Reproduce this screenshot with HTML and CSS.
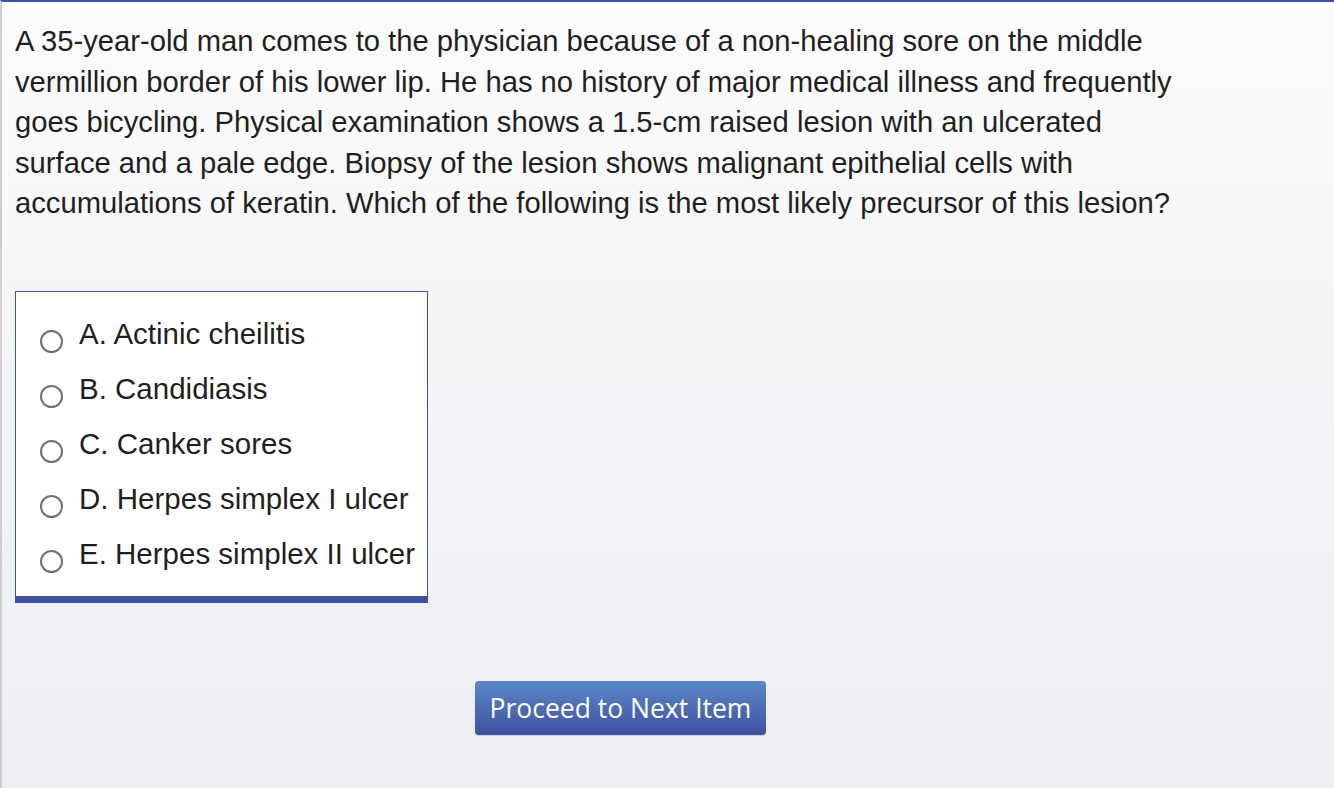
FILE: index.html
```html
<!DOCTYPE html>
<html>
<head>
<meta charset="utf-8">
<link rel="stylesheet" href="styles.css">
</head>
<body>
<div class="page">
  <p class="stem">A 35-year-old man comes to the physician because of a non-healing sore on the middle vermillion border of his lower lip. He has no history of major medical illness and frequently goes bicycling. Physical examination shows a 1.5-cm raised lesion with an ulcerated surface and a pale edge. Biopsy of the lesion shows malignant epithelial cells with accumulations of keratin. Which of the following is the most likely precursor of this lesion?</p>
  <div class="choices">
    <label class="choice"><span class="radio"></span><span>A. Actinic cheilitis</span></label>
    <label class="choice"><span class="radio"></span><span>B. Candidiasis</span></label>
    <label class="choice"><span class="radio"></span><span>C. Canker sores</span></label>
    <label class="choice"><span class="radio"></span><span>D. Herpes simplex I ulcer</span></label>
    <label class="choice"><span class="radio"></span><span>E. Herpes simplex II ulcer</span></label>
  </div>
  <div class="actions">
    <button class="next">Proceed to Next Item</button>
  </div>
</div>
</body>
</html>
```
FILE: styles.css
```css
html, body {
  margin: 0;
  padding: 0;
  height: 100%;
}
body {
  font-family: "Liberation Sans", Arial, sans-serif;
  color: #1f1f1f;
  background: linear-gradient(to bottom, #fcfcfc 0%, #f6f6f8 35%, #eceef4 100%);
  border-top: 2px solid #3f51a0;
  border-left: 2px solid #cfcfcf;
  box-sizing: border-box;
  overflow: hidden;
}
.page {
  padding: 0 0 0 13px;
}
.stem {
  margin: 0;
  padding-top: 19px;
  width: 1185px;
  font-size: 29.2px;
  line-height: 40.6px;
}
.choices {
  margin-top: 67px;
  box-sizing: border-box;
  width: 413px;
  height: 312px;
  background: #fff;
  border: 1px solid #3f51a0;
  border-bottom: 7px solid #3f51a0;
  padding-top: 15px;
  display: flex;
  flex-direction: column;
}
.choice {
  display: flex;
  align-items: center;
  height: 55px;
  padding-left: 24px;
  font-size: 29.5px;
}
.radio {
  box-sizing: border-box;
  width: 23px;
  height: 23px;
  border: 2px solid #707070;
  border-radius: 50%;
  background: #fff;
  margin-right: 16px;
  margin-top: 14px;
  flex: none;
}
.actions {
  display: flex;
  justify-content: center;
  width: 1211px;
  margin-top: 78px;
}
.next {
  font-family: "Open Sans", sans-serif;
  font-weight: 400;
  font-size: 26.5px;
  color: #fff;
  width: 291px;
  height: 54px;
  border: none;
  border-radius: 4px;
  background: linear-gradient(to bottom, #5b89c6 0%, #4e6cb4 50%, #3f51a0 100%);
  padding: 0;
  box-shadow: 0 1px 1px rgba(0,0,0,0.15);
}
```
